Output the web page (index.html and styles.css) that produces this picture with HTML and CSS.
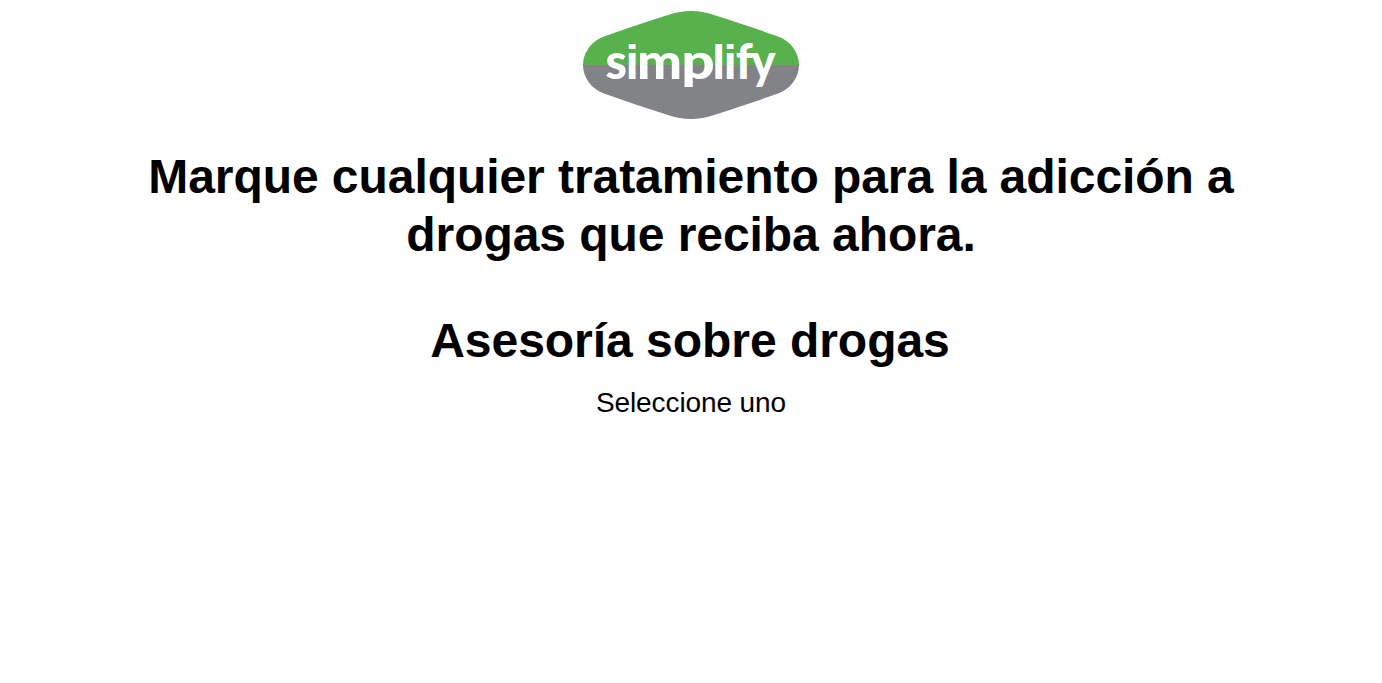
FILE: index.html
```
<!DOCTYPE html>
<html lang="es">
<head>
<meta charset="utf-8">
<title>Simplify</title>
<link rel="stylesheet" href="styles.css">
</head>
<body>
<main class="page">
<svg class="logo" viewBox="0 0 218 110" role="img" aria-label="simplify">
<path class="badge-green" d="M1 55C1 43 9 31 22 26.500C43 19 64 12 86 5Q109 -3 132 5C154 12 175 19 196 26.500C209 31 217 43 217 55Z"/>
<path class="badge-gray" d="M1 55C1 67 9 79 22 83.500C43 91 64 98 86 105Q109 113 132 105C154 98 175 91 196 83.500C209 79 217 67 217 55Z"/>
<text class="wordmark" y="68.500"><tspan x="23.500" textLength="21.500" lengthAdjust="spacingAndGlyphs">s</tspan><tspan class="square" x="43.500">i</tspan><tspan x="55" textLength="45" lengthAdjust="spacingAndGlyphs">m</tspan><tspan x="99.300" textLength="33.500" lengthAdjust="spacingAndGlyphs">p</tspan><tspan class="square" x="130">l</tspan><tspan class="square" x="141.600">i</tspan><tspan x="153.800" textLength="17" lengthAdjust="spacingAndGlyphs">f</tspan><tspan x="169" textLength="24.500" lengthAdjust="spacingAndGlyphs">y</tspan></text>
</svg>
<h1 class="question">Marque cualquier tratamiento para la adicción a drogas que reciba ahora.</h1>
<h2 class="item">Asesoría sobre drogas</h2>
<p class="hint">Seleccione uno</p>
</main>
</body>
</html>
```
FILE: styles.css
```
body { margin: 0; background: #fff; color: #000; font-family: "Liberation Sans", Arial, sans-serif; }
.page { display: flex; flex-direction: column; align-items: center; padding-top: 10px; text-align: center; }
.logo { display: block; width: 218px; height: 110px; }
.badge-green { fill: #58b14c; }
.badge-gray { fill: #828386; }
.wordmark { fill: #fff; font: 900 49px Lato, "Liberation Sans", sans-serif; }
.square { font: bold 48px "Liberation Sans", Arial, sans-serif; }
.question { width: 1140px; margin: 28px 0 0; font-size: 48px; line-height: 58px; letter-spacing: -0.06px; }
.item { margin: 48px 0 0; padding-right: 2px; font-size: 48px; line-height: 58px; letter-spacing: -0.03px; }
.hint { margin: 16px 0 0; font-size: 28px; line-height: 34px; letter-spacing: -0.1px; }
```
